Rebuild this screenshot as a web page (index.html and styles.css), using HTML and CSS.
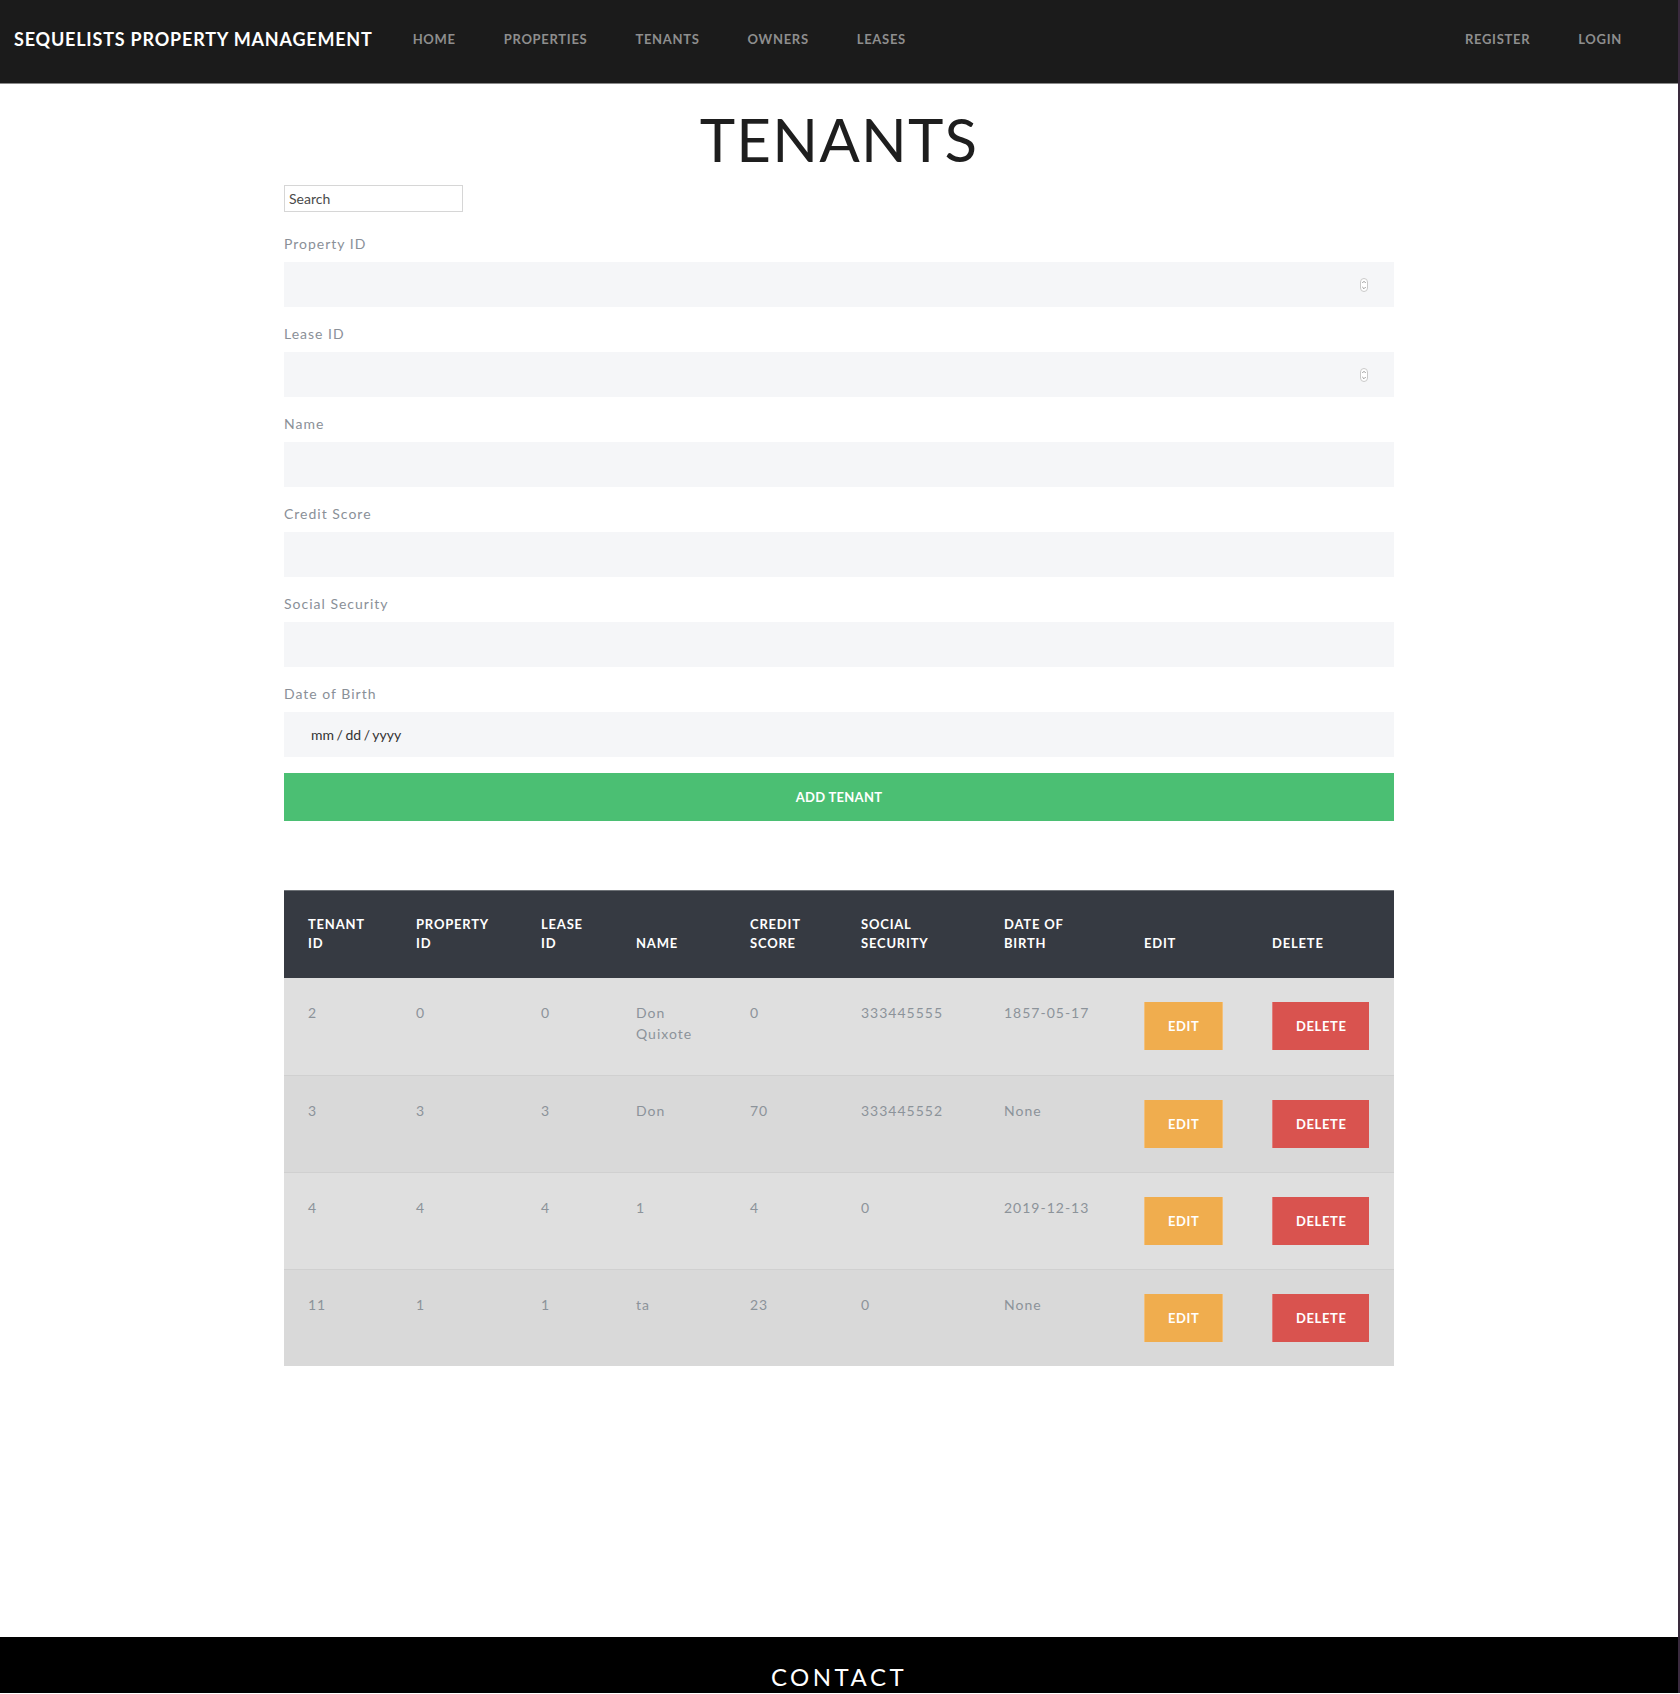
FILE: index.html
```html
<!DOCTYPE html>
<html lang="en">
<head>
<meta charset="utf-8">
<title>Tenants - Sequelists Property Management</title>
<link rel="stylesheet" href="styles.css">
</head>
<body>
<div class="page">
  <nav class="navbar">
    <a class="brand" href="#">SEQUELISTS PROPERTY MANAGEMENT</a>
    <ul class="nav-links">
      <li><a href="#">HOME</a></li>
      <li><a href="#">PROPERTIES</a></li>
      <li><a href="#">TENANTS</a></li>
      <li><a href="#">OWNERS</a></li>
      <li><a href="#">LEASES</a></li>
    </ul>
    <ul class="nav-links nav-right">
      <li><a href="#">REGISTER</a></li>
      <li><a href="#">LOGIN</a></li>
    </ul>
  </nav>

  <main class="container">
    <h1 class="page-title">TENANTS</h1>
    <input class="search" type="text" placeholder="Search">

    <form class="tenant-form">
      <div class="form-group">
        <label>Property ID</label>
        <div class="field">
          <input class="form-control" type="text">
          <svg class="spinner" width="8" height="14" viewBox="0 0 8 14"><rect x="0.5" y="0.5" width="7" height="13" rx="3.5" fill="#fff" stroke="#c9c9c9"/><path d="M2.3 5 L4 3.3 L5.7 5" fill="none" stroke="#8a8a8a" stroke-width="0.9"/><path d="M2.3 9 L4 10.7 L5.7 9" fill="none" stroke="#8a8a8a" stroke-width="0.9"/></svg>
        </div>
      </div>
      <div class="form-group">
        <label>Lease ID</label>
        <div class="field">
          <input class="form-control" type="text">
          <svg class="spinner" width="8" height="14" viewBox="0 0 8 14"><rect x="0.5" y="0.5" width="7" height="13" rx="3.5" fill="#fff" stroke="#c9c9c9"/><path d="M2.3 5 L4 3.3 L5.7 5" fill="none" stroke="#8a8a8a" stroke-width="0.9"/><path d="M2.3 9 L4 10.7 L5.7 9" fill="none" stroke="#8a8a8a" stroke-width="0.9"/></svg>
        </div>
      </div>
      <div class="form-group">
        <label>Name</label>
        <input class="form-control" type="text">
      </div>
      <div class="form-group">
        <label>Credit Score</label>
        <input class="form-control" type="text">
      </div>
      <div class="form-group">
        <label>Social Security</label>
        <input class="form-control" type="text">
      </div>
      <div class="form-group">
        <label>Date of Birth</label>
        <input class="form-control date" type="text" value="mm / dd / yyyy">
      </div>
      <button class="btn-add" type="button">ADD TENANT</button>
    </form>

    <table class="tenants">
      <thead>
        <tr>
          <th class="c-id">TENANT ID</th>
          <th class="c-prop">PROPERTY ID</th>
          <th class="c-lease">LEASE ID</th>
          <th class="c-name">NAME</th>
          <th class="c-credit">CREDIT SCORE</th>
          <th class="c-ssn">SOCIAL SECURITY</th>
          <th class="c-dob">DATE OF BIRTH</th>
          <th class="c-edit">EDIT</th>
          <th class="c-del">DELETE</th>
        </tr>
      </thead>
      <tbody>
        <tr>
          <td>2</td><td>0</td><td>0</td><td>Don Quixote</td><td>0</td><td>333445555</td><td>1857-05-17</td>
          <td><button class="btn btn-edit">EDIT</button></td>
          <td><button class="btn btn-delete">DELETE</button></td>
        </tr>
        <tr>
          <td>3</td><td>3</td><td>3</td><td>Don</td><td>70</td><td>333445552</td><td>None</td>
          <td><button class="btn btn-edit">EDIT</button></td>
          <td><button class="btn btn-delete">DELETE</button></td>
        </tr>
        <tr>
          <td>4</td><td>4</td><td>4</td><td>1</td><td>4</td><td>0</td><td>2019-12-13</td>
          <td><button class="btn btn-edit">EDIT</button></td>
          <td><button class="btn btn-delete">DELETE</button></td>
        </tr>
        <tr>
          <td>11</td><td>1</td><td>1</td><td>ta</td><td>23</td><td>0</td><td>None</td>
          <td><button class="btn btn-edit">EDIT</button></td>
          <td><button class="btn btn-delete">DELETE</button></td>
        </tr>
      </tbody>
    </table>
  </main>

  <footer class="footer">
    <h2 class="footer-title">CONTACT</h2>
  </footer>
</div>
</body>
</html>
```

FILE: styles.css
```css
* {
  box-sizing: border-box;
}

html, body {
  margin: 0;
  padding: 0;
  background: #ffffff;
}

body {
  font-family: Lato, "Open Sans", Arial, sans-serif;
  font-size: 14px;
  color: #212529;
}

.page {
  width: 1680px;
  border-right: 2px solid #3a2a3e;
  overflow: hidden;
}

/* ---------- navbar ---------- */
.navbar {
  display: flex;
  align-items: center;
  height: 84px;
  padding: 0 32px 5px 14px;
  background: #1b1b1b;
  border-bottom: 1px solid #8a8a8a;
}

.brand {
  color: #ffffff;
  text-decoration: none;
  font-size: 18px;
  font-weight: 700;
  letter-spacing: 0.8px;
  margin-right: 16px;
  white-space: nowrap;
}

.nav-links {
  display: flex;
  list-style: none;
  margin: 0;
  padding: 0;
}

.nav-links a {
  display: block;
  padding: 0 24px;
  color: #8e8e8e;
  text-decoration: none;
  font-size: 13px;
  font-weight: 700;
  letter-spacing: 0.7px;
}

.nav-right {
  margin-left: auto;
}

/* ---------- main ---------- */
.container {
  width: 1110px;
  margin: 0 auto;
  padding-bottom: 271px;
}

.page-title {
  margin: 19px 0 10px;
  text-align: center;
  font-size: 60px;
  line-height: 72px;
  font-weight: 400;
  letter-spacing: 1.2px;
  color: #1e1e1e;
}

.search {
  display: block;
  width: 179px;
  height: 27px;
  margin: 0 0 21px;
  padding: 0 4px;
  border: 1px solid #d6d6d6;
  font-family: Lato, Arial, sans-serif;
  font-size: 14px;
  color: #444;
  background: #fff;
  outline: none;
}

.search::placeholder {
  color: #4a4a4a;
}

.form-group {
  margin-bottom: 16px;
}

.form-group label {
  display: block;
  font-size: 14px;
  line-height: 21px;
  letter-spacing: 1px;
  color: #8a9098;
  margin-bottom: 8px;
}

.field {
  position: relative;
}

.form-control {
  display: block;
  width: 100%;
  height: 45px;
  border: none;
  background: #f5f6f8;
  padding: 0 27px;
  font-family: Lato, Arial, sans-serif;
  font-size: 14px;
  color: #333;
  outline: none;
}

.form-control.date {
  color: #333333;
  word-spacing: -1px;
}

.spinner {
  position: absolute;
  right: 26px;
  top: 16px;
}

.btn-add {
  display: block;
  width: 100%;
  height: 48px;
  border: none;
  background: #4bbf73;
  color: #ffffff;
  font-family: Lato, Arial, sans-serif;
  font-size: 13px;
  font-weight: 700;
  letter-spacing: 0.3px;
  cursor: pointer;
}

/* ---------- table ---------- */
.tenants {
  width: 1110px;
  margin-top: 69px;
  border-collapse: collapse;
  table-layout: fixed;
}

.tenants th {
  background: #363a42;
  color: #ffffff;
  text-align: left;
  vertical-align: bottom;
  font-size: 13px;
  font-weight: 700;
  line-height: 19px;
  letter-spacing: 0.8px;
  padding: 24px 24px 25px;
  border-top: 1px solid #6e7277;
}

.c-id { width: 108px; }
.c-prop { width: 125px; }
.c-lease { width: 95px; }
.c-name { width: 114px; }
.c-credit { width: 111px; }
.c-ssn { width: 143px; }
.c-dob { width: 140px; }
.c-edit { width: 128px; }
.c-del { width: 146px; }

.tenants td {
  vertical-align: top;
  padding: 24px 24px 24px 24px;
  height: 97px;
  font-size: 14px;
  line-height: 21px;
  letter-spacing: 1px;
  color: #8c939a;
  border-top: 1px solid #d0d0d0;
}

.tenants tbody tr:first-child td {
  border-top: none;
}

.tenants tbody tr:nth-child(odd) td {
  background: #dfdfdf;
}

.tenants tbody tr:nth-child(even) td {
  background: #d9d9d9;
}

.btn {
  display: inline-block;
  height: 48px;
  padding: 0 23px;
  border: none;
  color: #ffffff;
  font-family: Lato, Arial, sans-serif;
  font-size: 13px;
  font-weight: 700;
  letter-spacing: 0.6px;
  white-space: nowrap;
  cursor: pointer;
  vertical-align: top;
}

.btn-edit {
  background: #f0ad4e;
  border-left: 1px solid #f3c07a;
  border-right: 1px solid #f3c07a;
}

.btn-delete {
  background: #d9534f;
  border-left: 1px solid #e07e7b;
}

/* ---------- footer ---------- */
.footer {
  height: 56px;
  background: #000000;
  padding-top: 25px;
  overflow: hidden;
}

.footer-title {
  margin: 0;
  text-align: center;
  color: #ffffff;
  font-size: 24px;
  line-height: 29px;
  font-weight: 400;
  letter-spacing: 3.5px;
}
```
